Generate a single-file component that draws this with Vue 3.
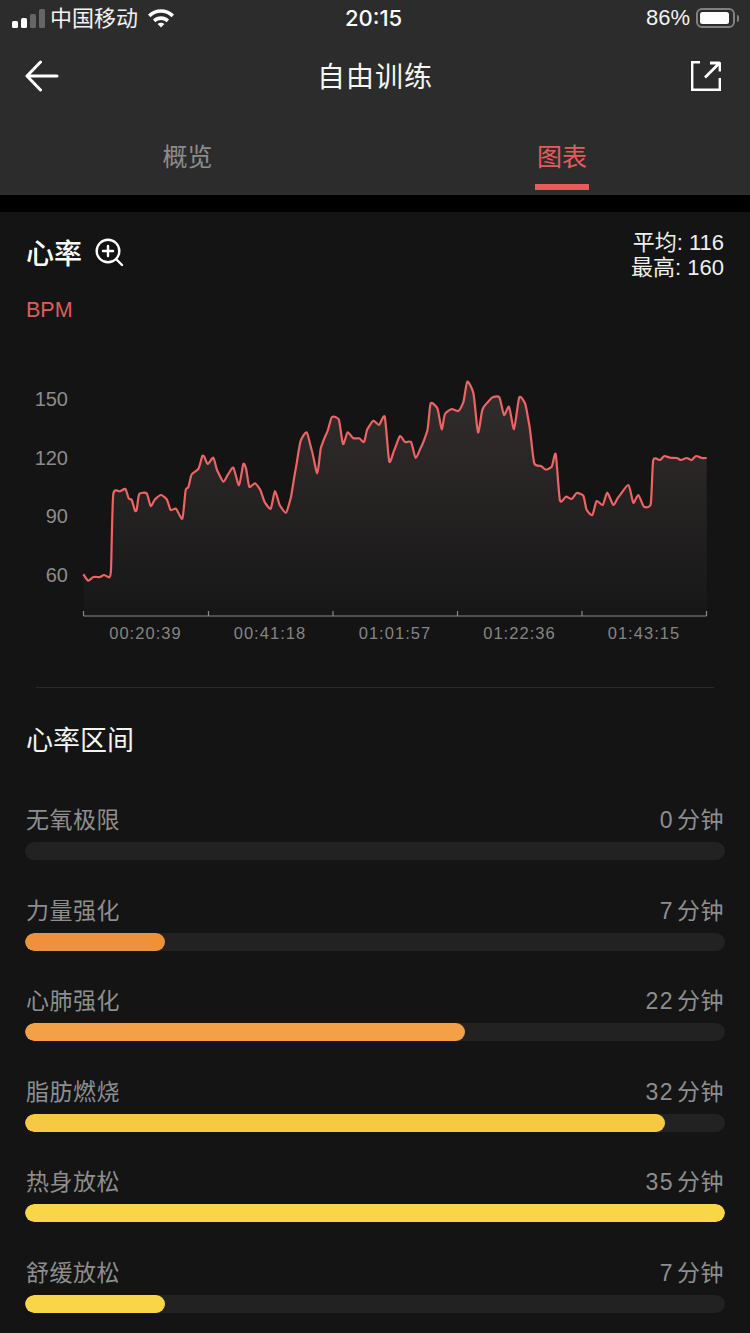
<script setup>
// hr trace read off the screenshot, split in three runs, each with its own x offset
const chartTop = 340
const runs = [
  [20, [[190,613],[205,632],[220,621],[240,621],[252,615],[268,622],[273,600],[280,372],[300,364],[316,357],[326,385],[335,390],[345,422],[350,420],[358,372],[380,370],[392,408],[405,388],[422,375],[440,388],[452,420],[468,416],[487,446],[497,360],[505,352],[515,313],[535,297],[547,258],[553,260],[563,282],[580,263],[592,302],[610,335],[625,312],[640,293],[657,346],[670,282],[678,295],[688,350],[705,340]]],
  [250, [[30,358],[45,398],[62,416],[75,363],[90,407],[108,428],[122,385],[137,297],[152,212],[170,187],[185,240],[202,310],[213,232],[232,185],[246,141],[266,148],[279,222],[293,187],[310,205],[328,205],[342,216],[352,178],[370,152],[387,165],[404,140],[418,275],[433,240],[450,198],[465,216],[483,216],[497,264],[513,232],[532,182],[542,100],[562,115],[575,178],[585,132],[605,117],[625,123],[640,97],[652,35],[670,68],[684,187],[697,120]]],
  [480, [[20,100],[38,82],[58,82],[72,135],[87,110],[102,177],[118,82],[135,100],[148,165],[163,280],[183,288],[197,299],[215,290],[227,252],[240,392],[258,380],[275,387],[290,369],[310,377],[320,420],[337,435],[350,393],[368,405],[382,368],[400,405],[415,382],[445,345],[460,398],[475,375],[492,410],[512,403],[520,270],[540,270],[553,258],[570,263],[590,264],[603,270],[620,264],[635,270],[648,258],[665,264],[680,264]]],
]
const pts = runs.flatMap(([ox, list]) => list.map(([x, y]) => [ox + x / 3, 370 + y / 3 - chartTop]))

const fmt = (n) => n.toFixed(1)
let line = `M${fmt(pts[0][0])} ${fmt(pts[0][1])}`
for (let i = 0; i < pts.length - 1; i++) {
  const p0 = pts[Math.max(i - 1, 0)]
  const p1 = pts[i]
  const p2 = pts[i + 1]
  const p3 = pts[Math.min(i + 2, pts.length - 1)]
  const c1 = [p1[0] + (p2[0] - p0[0]) / 9, p1[1] + (p2[1] - p0[1]) / 12]
  const c2 = [p2[0] - (p3[0] - p1[0]) / 9, p2[1] - (p3[1] - p1[1]) / 12]
  line += `C${fmt(c1[0])} ${fmt(c1[1])} ${fmt(c2[0])} ${fmt(c2[1])} ${fmt(p2[0])} ${fmt(p2[1])}`
}
const area = `${line}L707 275L84 275Z`

const yLabels = [
  { text: '150', y: 66 },
  { text: '120', y: 125 },
  { text: '90', y: 183 },
  { text: '60', y: 242 },
]
const xLabels = [
  { text: '00:20:39', x: 145.5 },
  { text: '00:41:18', x: 270 },
  { text: '01:01:57', x: 395 },
  { text: '01:22:36', x: 519.5 },
  { text: '01:43:15', x: 644 },
]
const ticks = [83.5, 208.5, 333, 457.5, 582, 706.5]

const zones = [
  { name: '无氧极限', minutes: 0, color: '#ef9139' },
  { name: '力量强化', minutes: 7, color: '#ef9139' },
  { name: '心肺强化', minutes: 22, color: '#f3a046' },
  { name: '脂肪燃烧', minutes: 32, color: '#f6c843' },
  { name: '热身放松', minutes: 35, color: '#f8d648' },
  { name: '舒缓放松', minutes: 7, color: '#f8d648' },
]
</script>

<template>
  <main class="screen">
    <header class="head">
      <div class="status">
        <div class="status-left">
          <span class="signal">
            <i class="s1"></i><i class="s2"></i><i class="s3"></i><i class="s4"></i>
          </span>
          <span class="carrier">中国移动</span>
          <svg class="wifi" width="28" height="20" viewBox="0 0 28 20">
            <path d="M1 6.6C8.4-.6 19.6-.6 27 6.6L24.6 9.2C18.4 3.4 9.6 3.4 3.4 9.2Z" fill="#fff" />
            <path d="M6 11.6C10.8 7.2 17.2 7.2 22 11.6L19.6 14.2C16.2 11.2 11.8 11.2 8.4 14.2Z" fill="#fff" />
            <path d="M10.6 16C12.8 14.4 15.2 14.4 17.4 16L14 19.6Z" fill="#fff" />
          </svg>
        </div>
        <span class="clock">20:15</span>
        <div class="status-right">
          <span>86%</span>
          <span class="battery"><i></i></span>
          <span class="nub"></span>
        </div>
      </div>

      <nav class="nav">
        <svg width="34" height="32" viewBox="0 0 34 32" fill="none" stroke="#fff" stroke-width="3" stroke-linecap="round" stroke-linejoin="round">
          <path d="M32 16H2M15.5 2L2 16L15.5 30" />
        </svg>
        <h1>自由训练</h1>
        <svg width="30" height="30" viewBox="0 0 30 30" fill="none" stroke="#fff" stroke-width="2.4">
          <path d="M9 1.2H1.2V28.8H28.8V17M28.8 1.2V10.5" />
          <path d="M14 16.5L28 2.5M19 2H28.8" stroke-width="2.8" />
        </svg>
      </nav>

      <div class="tabs">
        <div class="tab">概览</div>
        <div class="tab active">图表</div>
      </div>
    </header>

    <div class="gap"></div>

    <section class="hr-head">
      <div class="hr-title">
        <h2>心率</h2>
        <svg width="30" height="30" viewBox="0 0 30 30" fill="none" stroke="#fff" stroke-width="2.4" stroke-linecap="round">
          <circle cx="13" cy="13" r="11.3" />
          <path d="M8 13H18M13 8V18M21.5 21.5L27 27" />
        </svg>
      </div>
      <div class="hr-stats">
        <div>平均: 116</div>
        <div>最高: 160</div>
      </div>
    </section>
    <div class="bpm">BPM</div>

    <svg class="chart" width="750" height="320" viewBox="0 0 750 320">
      <defs>
        <linearGradient id="hrFill" x1="0" y1="0" x2="0" y2="1">
          <stop offset="0" stop-color="#332e2d" />
          <stop offset="1" stop-color="#171717" />
        </linearGradient>
      </defs>
      <path :d="area" fill="url(#hrFill)" />
      <path :d="line" fill="none" stroke="#ee6464" stroke-width="2.2" stroke-linejoin="round" />
      <path d="M83.5 276H706.5" stroke="#8a8a8a" stroke-width="1" />
      <path v-for="t in ticks" :key="t" :d="`M${t} 271V276`" stroke="#8a8a8a" stroke-width="1.2" />
      <text v-for="l in yLabels" :key="l.text" class="y-label" x="68" :y="l.y" text-anchor="end">{{ l.text }}</text>
      <text v-for="l in xLabels" :key="l.text" class="x-label" :x="l.x" y="299" text-anchor="middle">{{ l.text }}</text>
    </svg>

    <div class="divider"></div>

    <h3 class="zones-title">心率区间</h3>

    <section class="zones">
      <div v-for="z in zones" :key="z.name" class="zone">
        <div class="zone-row">
          <span>{{ z.name }}</span>
          <span class="mins"><b>{{ z.minutes }}</b>分钟</span>
        </div>
        <div class="track">
          <div class="fill" :style="{ width: (z.minutes / 35) * 100 + '%', background: z.color }"></div>
        </div>
      </div>
    </section>
  </main>
</template>

<style scoped>
.screen {
  width: 750px;
  height: 1333px;
  overflow: hidden;
  background: #141414;
  font-family: "Liberation Sans", "Noto Sans CJK SC", sans-serif;
  color: #fff;
}

.head {
  height: 195px;
  background: #2c2c2c;
}

.status {
  height: 40px;
  padding: 0 11px 4px 12px;
  box-sizing: border-box;
  display: flex;
  align-items: center;
  justify-content: space-between;
  position: relative;
  font-size: 22px;
}

.status-left,
.status-right {
  display: flex;
  align-items: center;
}

.signal {
  display: flex;
  align-items: flex-end;
  gap: 3px;
  height: 20px;
  margin-right: 5px;
}

.signal i {
  width: 6px;
  border-radius: 1.5px;
  background: #fff;
}

.s1 {
  height: 7px;
}

.s2 {
  height: 10px;
}

.signal .s3 {
  height: 14px;
  background: #666;
}

.signal .s4 {
  height: 19px;
  background: #666;
}

.carrier {
  color: #f2f2f2;
  margin: -4px 9px 0 0;
}

.clock {
  position: absolute;
  left: 345px;
  top: 5px;
  font-family: Inter, "Liberation Sans", sans-serif;
  font-size: 22px;
  font-weight: 500;
}

.status-right {
  gap: 6px;
  color: #f2f2f2;
}

.battery {
  width: 39px;
  height: 20px;
  box-sizing: border-box;
  border: 2px solid #808080;
  border-radius: 6px;
  padding: 2px;
  display: block;
}

.battery i {
  display: block;
  width: 29px;
  height: 12px;
  border-radius: 2.5px;
  background: #fff;
}

.nub {
  width: 2px;
  height: 7px;
  margin-left: -4px;
  border-radius: 0 2px 2px 0;
  background: #808080;
}

.nav {
  height: 72px;
  padding: 0 29px 0 25px;
  display: flex;
  align-items: center;
  justify-content: space-between;
}

.nav h1 {
  margin: -2px 0 0;
  font-size: 28px;
  font-weight: 400;
  letter-spacing: 1px;
  color: #f6f6f6;
}

.tabs {
  height: 83px;
  display: grid;
  grid-template-columns: 375px 374px;
}

.tab {
  justify-self: center;
  width: 54px;
  height: 78px;
  box-sizing: border-box;
  padding-top: 26px;
  text-align: center;
  font-size: 25px;
  line-height: 38px;
  white-space: nowrap;
  color: #8c8c8c;
}

.tab.active {
  color: #ea5a5a;
  border-bottom: 6px solid #ea5a5a;
}

.gap {
  height: 17px;
  background: #000;
}

.hr-head {
  height: 76px;
  padding: 18px 26px 0;
  box-sizing: border-box;
  display: flex;
  justify-content: space-between;
}

.hr-title {
  display: flex;
  align-items: flex-start;
  gap: 13px;
  padding-top: 8px;
}

.hr-title h2 {
  margin: 1px 0 0;
  font-size: 28px;
  line-height: 32px;
  font-weight: 500;
}

.hr-stats {
  font-size: 22px;
  line-height: 25px;
  text-align: right;
  color: #f0f0f0;
}

.bpm {
  height: 52px;
  padding: 10px 0 0 26px;
  box-sizing: border-box;
  font-size: 21.5px;
  line-height: 24px;
  color: #e45a5a;
}

.chart {
  display: block;
}

.y-label {
  font-size: 20px;
  fill: #8c8c8c;
}

.x-label {
  font-size: 16.5px;
  letter-spacing: 1.05px;
  fill: #858585;
}

.divider {
  height: 1px;
  margin: 27px 36px 0;
  background: #2a2a2a;
}

.zones-title {
  margin: 0;
  height: 112px;
  padding: 35px 0 0 26px;
  box-sizing: border-box;
  font-size: 27px;
  line-height: 36px;
  font-weight: 400;
  color: #f4f4f4;
}

.zones {
  padding: 0 25px;
}

.zone {
  height: 90.5px;
  padding-top: 3px;
  box-sizing: border-box;
}

.zone-row {
  display: flex;
  justify-content: space-between;
  height: 34px;
  padding: 0 1px;
  font-size: 23px;
  line-height: 34px;
  letter-spacing: 0.5px;
  color: #8e8e8e;
}

.mins b {
  font-weight: 400;
  letter-spacing: 1.5px;
  margin-right: 3px;
}

.track {
  height: 18px;
  margin-top: 5px;
  border-radius: 9px;
  background: #222;
  overflow: hidden;
}

.fill {
  height: 100%;
  border-radius: 9px;
}
</style>

<style>
html,
body {
  background: #141414;
}
</style>
